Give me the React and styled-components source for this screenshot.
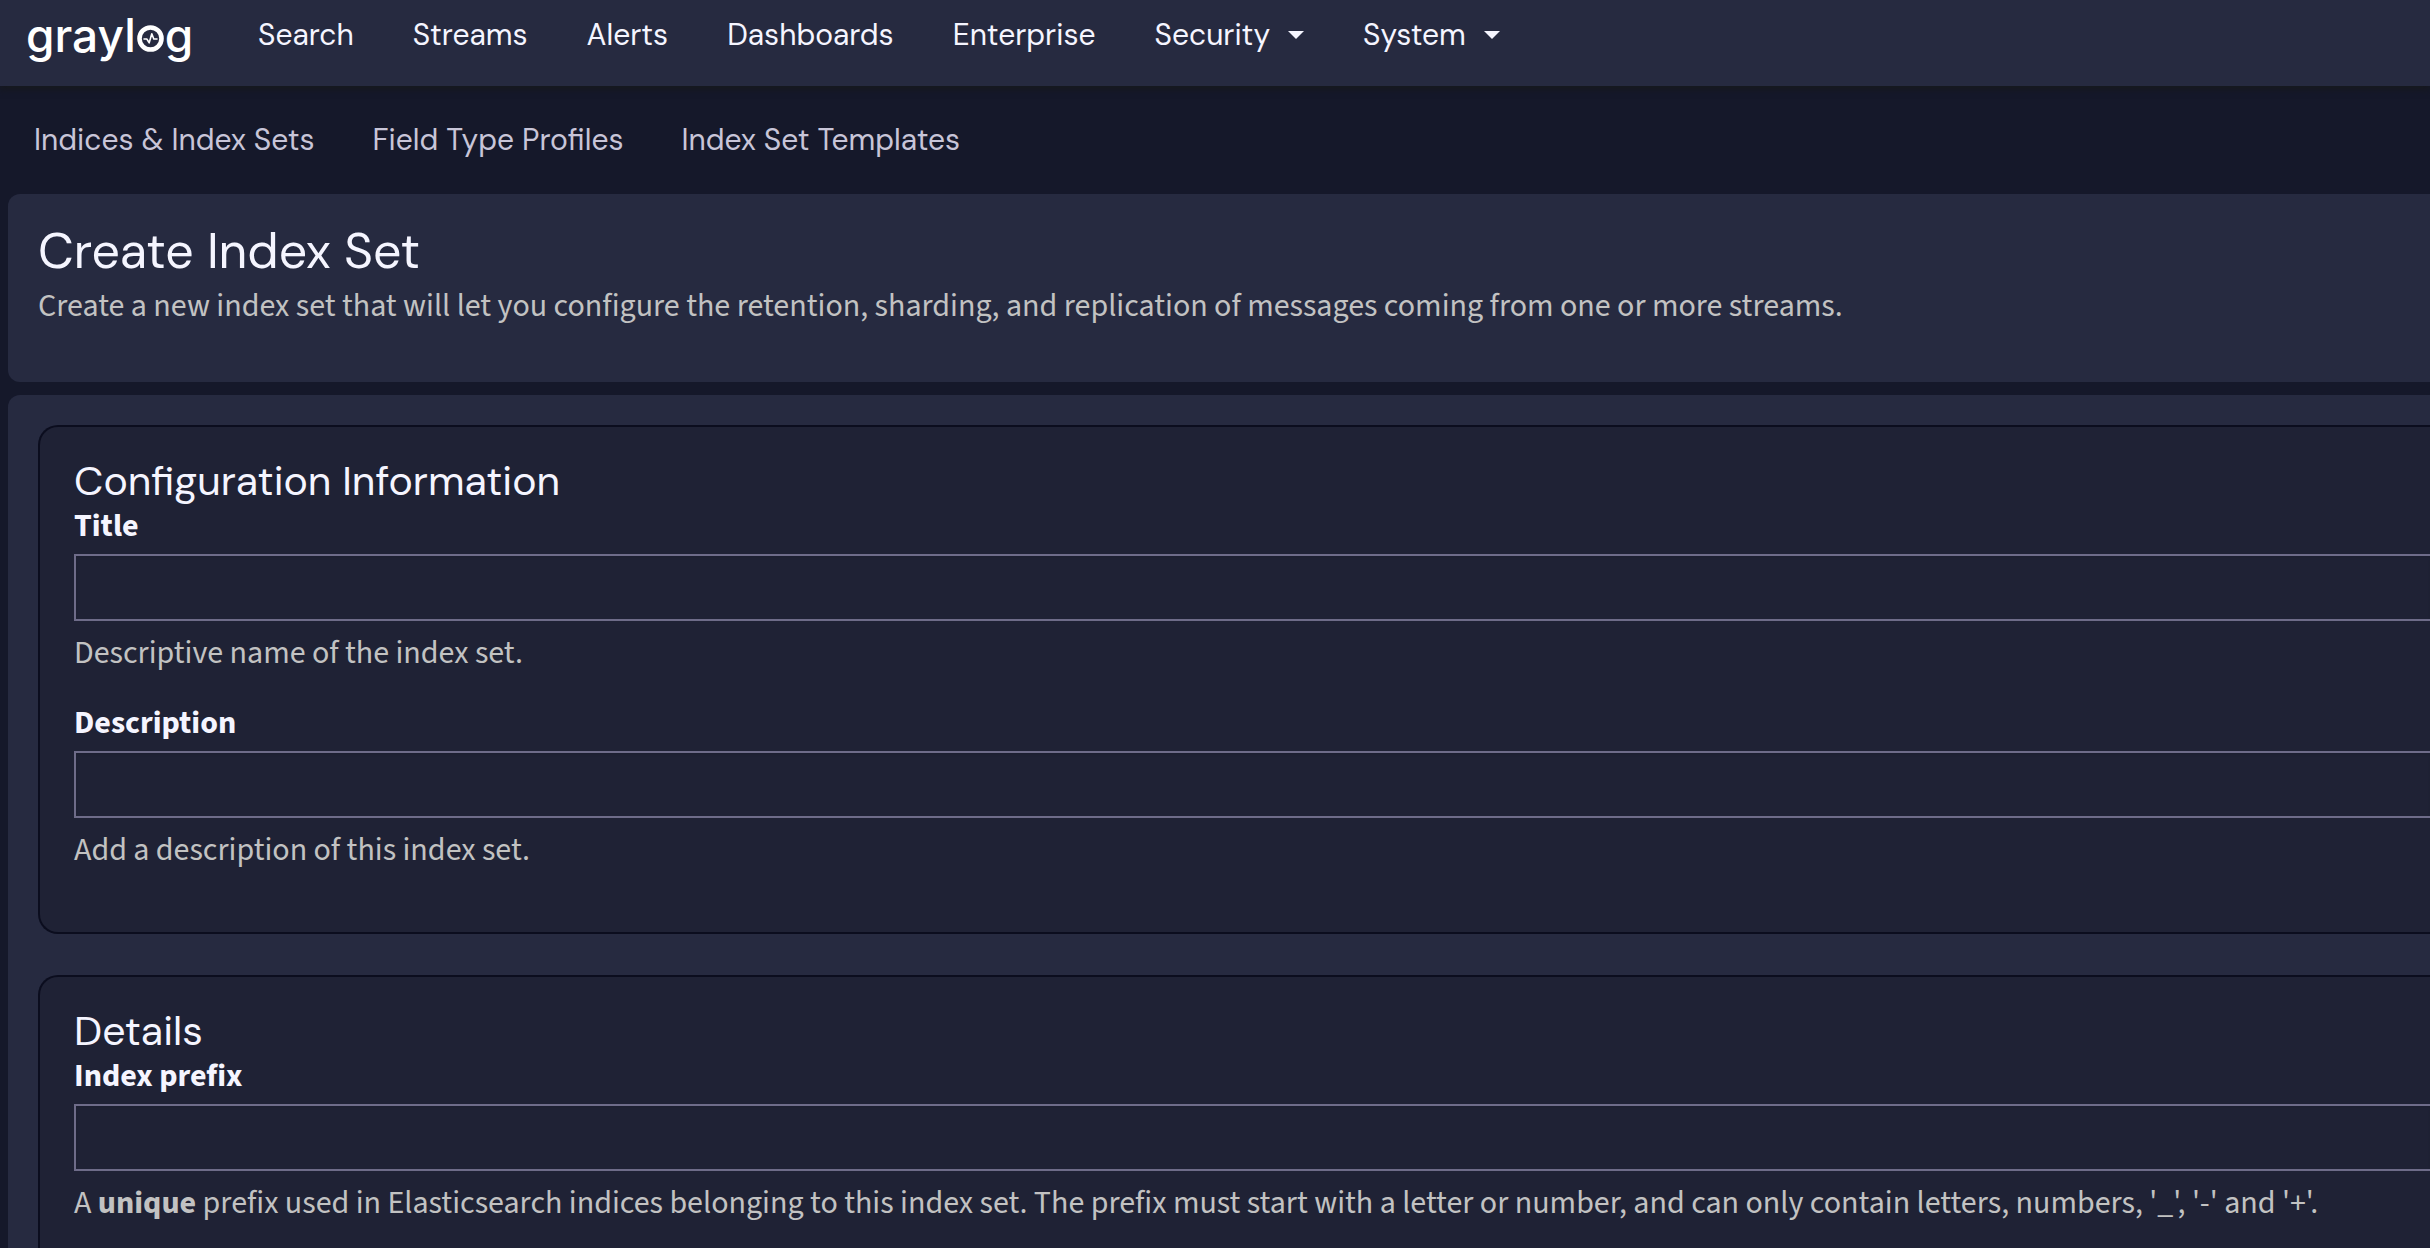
import React from 'react';
import styled, { createGlobalStyle } from 'styled-components';

const headingFont = '"DM Sans", Inter, sans-serif';
const bodyFont = '"Source Sans 3", "Noto Sans CJK SC", sans-serif';

const color = {
  page: '#15182a',
  surface: '#262a40',
  panel: '#1f2235',
  panelBorder: '#0b0d1e',
  inputBorder: '#6e6c89',
  text: '#f5f5ff',
  muted: '#c8c5d8',
  help: '#c2c2c2',
};

const GlobalStyle = createGlobalStyle`
  *, *::before, *::after { box-sizing: border-box; }
  body {
    margin: 0;
    background: ${color.page};
    color: ${color.text};
    font: 400 32px/40px ${bodyFont};
  }
  h1, h2, p, ul { margin: 0; padding: 0; }
  a { text-decoration: none; }
`;

const Page = styled.div`
  height: 100vh;
  display: flex;
  flex-direction: column;
  overflow: hidden;
`;

const Navbar = styled.header`
  display: flex;
  flex-shrink: 0;
  align-items: center;
  height: 86px;
  padding: 0 26px 16px;
  background: ${color.surface};
  box-shadow: 0 4px 6px #16181f;
`;

const Logo = styled.a`
  display: flex;
  align-items: baseline;
  width: 232px;
  color: #ffffff;
  font: 500 46px/54px Inter, sans-serif;
`;

const Pulse = styled.svg`
  width: 27px;
  height: 27px;
  margin: 0 1px;
  fill: none;
  stroke: currentColor;
`;

const NavList = styled.ul`
  display: flex;
  gap: ${({ $gap }) => $gap}px;
  list-style: none;
`;

const NavLink = styled.a`
  display: block;
  color: ${({ $muted }) => ($muted ? color.muted : color.text)};
  font: 400 30px/40px ${headingFont};
`;

const NavToggle = styled.button`
  display: flex;
  align-items: center;
  gap: 18px;
  padding: 0;
  border: 0;
  background: none;
  color: ${color.text};
  font: 400 30px/40px ${headingFont};
`;

const Caret = styled.span`
  border: 8px solid transparent;
  border-top-color: currentColor;
  border-bottom: 0;
`;

const Subnav = styled.nav`
  display: flex;
  flex-shrink: 0;
  align-items: center;
  height: 108px;
  padding: 0 34px;
`;

const Content = styled.main`
  display: flex;
  flex-direction: column;
  gap: 13px;
  padding-left: 8px;
`;

const Card = styled.section`
  padding: 30px 0 0 30px;
  background: ${color.surface};
  border-radius: 12px 0 0 12px;
`;

const PageTitle = styled.h1`
  font: 400 50px/54px ${headingFont};
`;

const Lead = styled.p`
  padding: 8px 0 56px;
  color: ${color.help};
`;

const Panel = styled.section`
  margin-bottom: 41px;
  padding: 32px 0 32px 34px;
  border: 2px solid ${color.panelBorder};
  border-right: 0;
  border-radius: 20px 0 0 20px;
  background: ${color.panel};
`;

const PanelTitle = styled.h2`
  margin-bottom: 2px;
  font: 400 41px/45px ${headingFont};
`;

const Group = styled.div`
  margin-bottom: 30px;
`;

const Label = styled.label`
  display: block;
  margin-bottom: 8px;
  font-weight: 700;
`;

const TextInput = styled.input`
  display: block;
  width: 100%;
  height: 67px;
  margin-bottom: 12px;
  padding: 0 24px;
  border: 2px solid ${color.inputBorder};
  border-right: 0;
  border-radius: 0;
  outline: none;
  background: transparent;
  box-shadow: inset 0 2px 2px rgba(0, 0, 0, 0.08);
  color: inherit;
  font: inherit;
`;

const Help = styled.p`
  color: ${color.help};
`;

function Field({ id, label, children }) {
  return (
    <Group>
      <Label htmlFor={id}>{label}</Label>
      <TextInput id={id} type="text" aria-describedby={`${id}-help`} />
      <Help id={`${id}-help`}>{children}</Help>
    </Group>
  );
}

const mainLinks = ['Search', 'Streams', 'Alerts', 'Dashboards', 'Enterprise'];
const mainMenus = ['Security', 'System'];
const subLinks = ['Indices & Index Sets', 'Field Type Profiles', 'Index Set Templates'];

export default function App() {
  return (
    <>
      <GlobalStyle />
      <Page>
        <Navbar>
          <Logo href="#">
            grayl
            <Pulse viewBox="0 0 27 27" aria-hidden="true">
              <circle cx="13.5" cy="13.5" r="11" strokeWidth="4.6" />
              <path
                d="M7 14H9.8L12.2 17.8L14.8 8.8L16.8 14H20"
                strokeWidth="1.6"
                strokeLinecap="round"
                strokeLinejoin="round"
              />
            </Pulse>
            g
          </Logo>
          <nav>
            <NavList $gap={59}>
              {mainLinks.map((text) => (
                <li key={text}>
                  <NavLink href="#">{text}</NavLink>
                </li>
              ))}
              {mainMenus.map((text) => (
                <li key={text}>
                  <NavToggle type="button">
                    {text}
                    <Caret />
                  </NavToggle>
                </li>
              ))}
            </NavList>
          </nav>
        </Navbar>
        <Subnav>
          <NavList $gap={58}>
            {subLinks.map((text) => (
              <li key={text}>
                <NavLink $muted href="#">{text}</NavLink>
              </li>
            ))}
          </NavList>
        </Subnav>
        <Content>
          <Card>
            <PageTitle>Create Index Set</PageTitle>
            <Lead>
              Create a new index set that will let you configure the retention, sharding, and
              replication of messages coming from one or more streams.
            </Lead>
          </Card>
          <Card as="form">
            <Panel>
              <PanelTitle>Configuration Information</PanelTitle>
              <Field id="title" label="Title">Descriptive name of the index set.</Field>
              <Field id="description" label="Description">Add a description of this index set.</Field>
            </Panel>
            <Panel>
              <PanelTitle>Details</PanelTitle>
              <Field id="index-prefix" label="Index prefix">
                A <strong>unique</strong> prefix used in Elasticsearch indices belonging to this
                index set. The prefix must start with a letter or number, and can only contain
                letters, numbers, '_', '-' and '+'.
              </Field>
            </Panel>
          </Card>
        </Content>
      </Page>
    </>
  );
}
